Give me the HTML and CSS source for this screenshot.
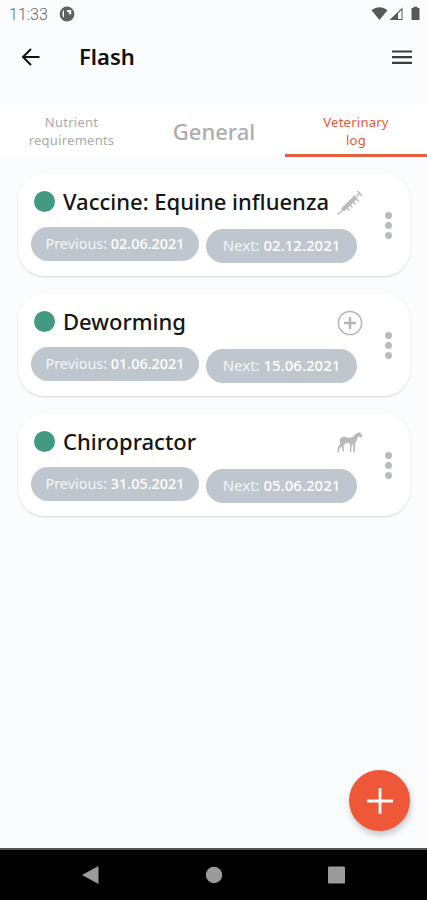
FILE: index.html
```html
<!DOCTYPE html>
<html lang="en">
<head>
<meta charset="utf-8">
<title>Flash</title>
<link rel="stylesheet" href="styles.css">
</head>
<body>
<div class="screen">
  <div class="status">
    <span class="clock">11:33</span>
    <svg class="notice" width="16" height="16" viewBox="0 0 16 16"><circle cx="8" cy="8" r="7.400" fill="#606163"/><path d="M4.200 4.500C3 7 3 9.500 5 12V4zM8 4h4.200v4.200H9.800V6H8z" fill="#fafcfe"/></svg>
    <svg class="signals" width="49" height="16" viewBox="0 0 49 16"><path d="M.5 4.300C5.500.2 11.500.2 16.500 4.300L8.500 14z" fill="#58595b"/><path d="M18.500 14L31.500 1.500V14z" fill="#58595b"/><path d="M27 7.500L30.500 4v9H27z" fill="#fafcfe"/><path d="M40.500 2h2V.7h4V2h2v12h-8V2z" fill="#58595b"/></svg>
  </div>
  <header class="bar">
    <svg class="back" width="20" height="20" viewBox="0 0 20 20"><path d="M18.500 10H2.500M10 2L2 10l8 8" fill="none" stroke="#111" stroke-width="2"/></svg>
    <h1>Flash</h1>
    <svg class="menu" width="20" height="16" viewBox="0 0 20 16"><path d="M0 2.500h20M0 8.200h20M0 13.900h20" stroke="#3c3c3c" stroke-width="2.200"/></svg>
  </header>
  <nav class="tabs">
    <div class="tab">Nutrient<br>requirements</div>
    <div class="tab large">General</div>
    <div class="tab active">Veterinary<br>log</div>
  </nav>
  <main class="list">
    <article class="card">
      <div class="body">
        <div class="head"><i class="state"></i><h2>Vaccine: Equine influenza</h2>
          <svg class="icon" width="26" height="26" viewBox="0 0 26 26"><g stroke="#bbb" fill="none"><path d="M.5 24.500l6-5" stroke-width="1.400"/><path d="M5.500 20L18.500 7.500" stroke-width="4.500"/><path d="M7.500 15.500l5 5M10.500 12.500l5 5M13.500 9.500l5 5M16 5.500l6 6M17.500 8.500L23 3M20.500 1l4.500 5" stroke-width="1.500"/></g></svg></div>
        <div class="dates"><span class="pill prev">Previous: <b>02.06.2021</b></span><span class="pill next">Next: <b>02.12.2021</b></span></div>
      </div>
      <div class="more"><i></i><i></i><i></i></div>
    </article>
    <article class="card">
      <div class="body">
        <div class="head"><i class="state"></i><h2>Deworming</h2>
          <svg class="icon" width="26" height="26" viewBox="0 0 26 26"><g stroke="#b4b4b4" fill="none"><circle cx="13" cy="13" r="11.600" stroke-width="1.500"/><path d="M13 7v12M7 13h12" stroke-width="2.400"/></g></svg></div>
        <div class="dates"><span class="pill prev">Previous: <b>01.06.2021</b></span><span class="pill next">Next: <b>15.06.2021</b></span></div>
      </div>
      <div class="more"><i></i><i></i><i></i></div>
    </article>
    <article class="card">
      <div class="body">
        <div class="head"><i class="state"></i><h2>Chiropractor</h2>
          <svg class="icon" width="26" height="26" viewBox="0 0 26 26"><path d="M3.500 8.500C5 6.500 7 6.500 9 7.200c2.500.8 5 .7 7-.5l3-3.200 3-.8.700-1.200.8 1.500L25.500 6l-1 1.500L21 6.500l-1.200 4-1.800 3 .3 4-.6 4.700h-1.500l.3-4.500-1.300-4.500-.8 4.500-.2 4.500h-1.500l.2-5-.3-4.200c-1.500.3-2.600.1-3.900-.1L6.500 16l.7 5.500H5.700l-1-5-2.200 2L2 22.500H.3L1 17.200l2-3-.3-4.700L1.500 12z" fill="#b9b9b9"/></svg></div>
        <div class="dates"><span class="pill prev">Previous: <b>31.05.2021</b></span><span class="pill next">Next: <b>05.06.2021</b></span></div>
      </div>
      <div class="more"><i></i><i></i><i></i></div>
    </article>
  </main>
  <div class="fab"><svg width="26" height="26" viewBox="0 0 26 26"><path d="M13 0v26M0 13h26" stroke="#fff" stroke-width="2.800"/></svg></div>
  <footer class="system">
    <svg width="17" height="18" viewBox="0 0 17 18"><path d="M0 9L16.500 0v18z" fill="#9b9b9b"/></svg>
    <svg width="17" height="18" viewBox="0 0 17 18"><circle cx="9" cy="9" r="8.200" fill="#9b9b9b"/></svg>
    <svg width="17" height="18" viewBox="0 0 17 18"><rect y=".5" width="17" height="17" rx="1" fill="#9b9b9b"/></svg>
  </footer>
</div>
</body>
</html>
```
FILE: styles.css
```css
* { box-sizing: border-box; }
body { margin: 0; font-family: "Noto Sans", "Open Sans", sans-serif; }
h1, h2 { margin: 0; white-space: nowrap; }
svg { display: block; flex: none; }
.screen { position: relative; display: flex; flex-direction: column; width: 427px; height: 900px; background: #fafcfe; overflow: hidden; }
.status { display: flex; align-items: center; height: 28px; padding: 0 7px 0 9px; }
.clock { width: 50px; padding-top: 1px; font: 300 16px/27px Roboto, sans-serif; color: #66676a; }
.signals { margin-left: auto; }
.bar { display: flex; align-items: center; height: 58px; padding: 0 15px 0 21px; }
.bar h1 { margin: -2px 0 0 38px; font-size: 22px; font-weight: 600; line-height: 30px; color: #111; }
.menu { margin-left: auto; }
.tabs { display: grid; grid-template-columns: 143px 142px 142px; height: 53px; margin-top: 18px; background: #fff; }
.tab { display: flex; align-items: center; justify-content: center; padding-top: 1px; text-align: center; font-size: 13px; letter-spacing: .25px; line-height: 18px; color: #aaa; }
.large { padding-top: 0; font-size: 22px; font-weight: 500; letter-spacing: 0; color: #adadad; }
.active { padding-top: 4px; border-bottom: 3px solid #e2603f; color: #e5583a; }
.list { display: flex; flex-direction: column; gap: 18px; padding: 17px 17px 0 18px; }
.card { display: flex; height: 102px; padding-left: 13px; border-radius: 26px; background: #fff; box-shadow: 0 1px 2px rgba(0,0,0,.15); }
.body { width: 333px; }
.head { display: flex; align-items: center; height: 53px; padding-top: 3px; }
.state { width: 21px; height: 21px; margin: -1px 8px 0 3px; border-radius: 50%; background: #429a82; }
.head h2 { margin-top: -2px; font-size: 22px; font-weight: 500; line-height: 30px; color: #151515; }
.icon { margin: 2px 1px 0 auto; }
.dates { display: flex; gap: 7px; }
.pill { height: 34px; border-radius: 17px; background: #bfc6ce; text-align: center; white-space: nowrap; font-size: 15px; line-height: 34px; color: #f4f6f8; }
.pill b { font-weight: 500; color: #fff; }
.prev { width: 168px; font-size: 14.4px; }
.next { width: 151px; margin-top: 2px; line-height: 33px; }
.more { display: flex; flex-direction: column; gap: 3px; margin: 38px 0 0 21px; }
.more i { width: 7px; height: 7px; border-radius: 50%; background: #b8bbc0; }
.fab { position: absolute; left: 349px; top: 770px; display: flex; align-items: center; justify-content: center; width: 61px; height: 61px; border-radius: 50%; background: #ee5737; box-shadow: 1px 4px 6px rgba(0,0,0,.22); }
.system { display: flex; align-items: center; justify-content: space-between; height: 52px; margin-top: auto; padding: 0 82px; border-top: 2px solid #555; background: #000; }
```
